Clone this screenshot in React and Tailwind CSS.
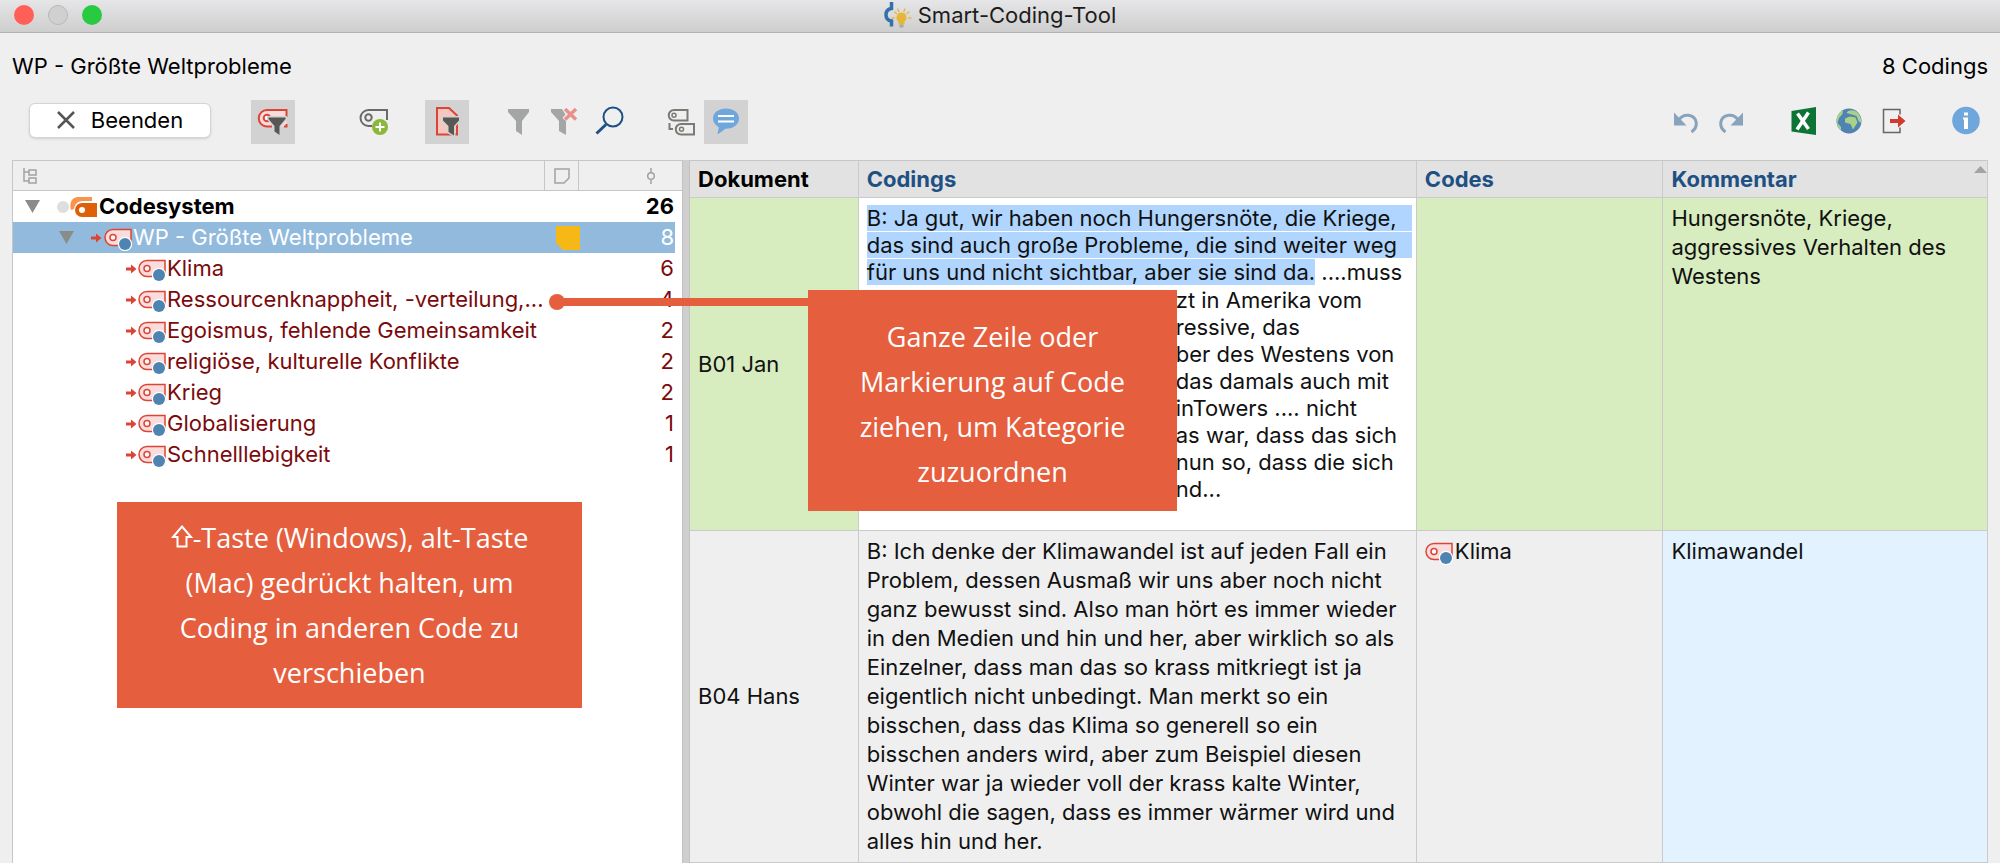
import clsx from 'clsx';

const CODES = [
  { name: 'Klima', count: 6 },
  { name: 'Ressourcenknappheit, -verteilung,...', count: 4 },
  { name: 'Egoismus, fehlende Gemeinsamkeit', count: 2 },
  { name: 'religiöse, kulturelle Konflikte', count: 2 },
  { name: 'Krieg', count: 2 },
  { name: 'Globalisierung', count: 1 },
  { name: 'Schnelllebigkeit', count: 1 },
];

const JAN_LINES = [
  'zt in Amerika vom',
  'ressive, das',
  'ber des Westens von',
  'das damals auch mit',
  'inTowers .... nicht',
  'as war, dass das sich',
  'nun so, dass die sich',
  'nd...',
];

/* ---------- icons ---------- */

function CodeIcon() {
  return (
    <svg width="28" height="26" viewBox="0 0 28 26" className="shrink-0" aria-hidden="true">
      <path d="M9 4.5H27V20.5H9A8 8 0 0 1 9 4.5Z" fill="#f9dcdb" stroke="#dc4535" strokeWidth="1.5" />
      <circle cx="9" cy="12.5" r="3" fill="#fff" stroke="#dc4535" strokeWidth="1.5" />
      <circle cx="21" cy="19" r="7.2" fill="#fff" />
      <circle cx="21" cy="19" r="6" fill="#4f84b2" />
    </svg>
  );
}

function ArrowIcon() {
  return (
    <svg width="11" height="10" viewBox="0 0 11 10" className="shrink-0" aria-hidden="true">
      <path d="M0 3.5H5V0.5L10.5 5L5 9.5V6.5H0Z" fill="#dc4535" />
    </svg>
  );
}

function CodesystemIcon() {
  return (
    <svg width="28" height="24" viewBox="0 0 28 24" className="shrink-0" aria-hidden="true">
      <path d="M1 15C-1 8 2 2 8 2H22V6H12C6 7 5 10 4 14Z" fill="#fa934e" />
      <path d="M12 8H27V22H12A7 7 0 0 1 12 8Z" fill="#dd5f07" />
      <circle cx="12" cy="15" r="3" fill="#fff" />
    </svg>
  );
}

function Triangle() {
  return (
    <svg width="15" height="13" viewBox="0 0 15 13" className="shrink-0" aria-hidden="true">
      <path d="M0 0H15L7.5 13Z" fill="#8a8c8a" />
    </svg>
  );
}

function ShiftIcon() {
  return (
    <svg width="22" height="23" viewBox="0 0 22 23" className="inline-block align-baseline" role="img" aria-label="Umschalt">
      <path d="M11 1.5L20 12H15.5V21.500H6.500V12H2Z" fill="none" stroke="#fff" strokeWidth="2" />
    </svg>
  );
}

function TitleIcon() {
  return (
    <svg width="28" height="26" viewBox="0 0 28 26" aria-hidden="true">
      <path d="M7.500 0V6.500C4 7 2 9.500 2 12.700C2 16 4 18.500 7.500 19V24.500" fill="none" stroke="#3470ab" strokeWidth="3.500" />
      <path d="M7.500 16H11M24 16H27.500M10 9.500L13 12M13.500 6.500L15 10M21 6.500L19.800 10M25.500 9.500L22.500 12" stroke="#e8b850" strokeWidth="1.500" />
      <path d="M17.500 10.500A5 5 0 0 0 14.500 19.500V22.500H20.500V19.500A5 5 0 0 0 17.500 10.500Z" fill="#e5b63a" />
      <path d="M15.500 22.500H19.500V25.500H15.500Z" fill="#a9a9a4" />
    </svg>
  );
}

function Svg({ children }) {
  return (
    <svg width="32" height="32" viewBox="0 0 32 32" fill="none" aria-hidden="true">
      {children}
    </svg>
  );
}

const CodeFilterIcon = () => (
  <Svg>
    <path d="M29.500 20V4H10A8.200 8.200 0 0 0 10 20.500H29.500Z" fill="#f9dcdb" />
    <path d="M29.500 11V4H10A8.200 8.200 0 0 0 10 20.500H15M29.500 18V20.500H27" stroke="#dc4535" strokeWidth="2" />
    <circle cx="10" cy="12" r="3.300" fill="#fff" stroke="#dc4535" strokeWidth="2" />
    <path d="M11.500 11.500H28.500V13L22.500 20V29L17.500 25.500V20L11.500 13Z" fill="#575755" stroke="#d2d2d2" strokeWidth="3" paintOrder="stroke" />
  </Svg>
);

const AddCodeIcon = () => (
  <Svg>
    <path d="M29 14V4H10.500A8 8 0 0 0 10.500 20H14" stroke="#6a6a68" strokeWidth="2" />
    <circle cx="10.500" cy="11.500" r="3.200" stroke="#6a6a68" strokeWidth="2" />
    <circle cx="22" cy="21" r="8" fill="#8bb73c" />
    <path d="M17.500 21H26.500M22 16.500V25.500" stroke="#fff" strokeWidth="2" />
  </Svg>
);

const DocFilterIcon = () => (
  <Svg>
    <path d="M6 2H18L26 9.500V28.500H6Z" fill="#f6c6c1" stroke="#dc4535" strokeWidth="2" />
    <path d="M12 11.500H28V14.500L23 20V29.500L17.500 26V20L12 14.500Z" fill="#575755" stroke="#d2d2d2" strokeWidth="3" paintOrder="stroke" />
  </Svg>
);

const FilterIcon = () => (
  <Svg>
    <path d="M5 3H26V6L19 15V29L13 25V15L5 6Z" fill="#a4a6a5" />
  </Svg>
);

const FilterClearIcon = () => (
  <Svg>
    <path d="M3 3H14L17.500 8.500L14.500 12L18 15V29L11 25V15L3 6Z" fill="#a4a6a5" />
    <path d="M17 3L28 13.500M28 3L17 13.500" stroke="#e8918b" strokeWidth="3.500" />
  </Svg>
);

const SearchIcon = () => (
  <Svg>
    <circle cx="20" cy="11" r="9.500" stroke="#1f4f86" strokeWidth="2" />
    <path d="M13 18.500L3.500 27.500" stroke="#1f4f86" strokeWidth="3" />
  </Svg>
);

const CodeLevelsIcon = () => (
  <Svg>
    <g stroke="#7b7b76" strokeWidth="2">
      <path d="M9 4H22.500V14.500H9A5.200 5.200 0 0 1 9 4Z" />
      <circle cx="9" cy="9.200" r="2" strokeWidth="1.500" />
      <path d="M16 18H29V28.500H16A5.200 5.200 0 0 1 16 18Z" />
      <circle cx="16.500" cy="23.200" r="2" strokeWidth="1.500" />
      <path d="M4.500 17V23H8" />
    </g>
  </Svg>
);

const CommentIcon = () => (
  <Svg>
    <path d="M16 2.500C8.500 2.500 3 6.800 3 12.500C3 16.200 5.300 19.300 8.800 21.200L7.500 28.500L15.500 22.800C23.500 23 29 18.500 29 12.500C29 6.800 23.500 2.500 16 2.500Z" fill="#6fa7dc" />
    <path d="M8 10H24M8 15.500H24" stroke="#fff" strokeWidth="2" />
  </Svg>
);

const UndoIcon = () => (
  <Svg>
    <path d="M4 6.500V19.500H16.500Z" fill="#88a3bc" />
    <path d="M9 14C13 7 25 7.500 26.300 17C26.500 21 24.500 24 21.500 26" stroke="#88a3bc" strokeWidth="3" />
  </Svg>
);

const RedoIcon = () => (
  <Svg>
    <path d="M28 6.500V19.500H15.500Z" fill="#88a3bc" />
    <path d="M23 14C19 7 7 7.500 5.700 17C5.500 21 7.500 24 10.500 26" stroke="#88a3bc" strokeWidth="3" />
  </Svg>
);

const ExcelIcon = () => (
  <Svg>
    <path d="M3.500 5L28 1V29L3.500 25.500Z" fill="#0c7434" />
    <path d="M9.500 7.500L20.500 23M20.500 6.500L9 23.500" stroke="#fff" strokeWidth="3.500" />
  </Svg>
);

const GlobeIcon = () => (
  <Svg>
    <circle cx="16" cy="15" r="12.500" fill="#4e83b3" />
    <path d="M4 11.500C5.500 7.500 7.500 5.500 10 4L9.500 8L6 12L4.500 17L8 21V24.500C4.500 21 3 16.500 4 11.500Z" fill="#a9d18a" />
    <path d="M13.500 7C16 3 22 4 25 7C27.500 10 28.500 13 28 17L25.500 15L23.500 10L19 8.500Z" fill="#a9d18a" />
    <path d="M12 12.500L17 10.500L22.500 11.500L24.500 16.500L20 23.500L17.500 18L12 16.500Z" fill="#a9d18a" />
  </Svg>
);

const ExportIcon = () => (
  <Svg>
    <path d="M22 8.500V3.500H5.500V26.500H22V21.500" stroke="#666" strokeWidth="1.500" />
    <path d="M12 13H20V8.500L27.500 15L20 21.500V17H12Z" fill="#d23a2d" />
  </Svg>
);

const InfoIcon = () => (
  <Svg>
    <circle cx="16" cy="14.500" r="13.800" fill="#6fa7dc" />
    <path d="M14 6.500H18V9.500H14ZM13 11.500H18V23H14V13.500H13Z" fill="#fff" />
  </Svg>
);

/* ---------- parts ---------- */

function ToolButton({ label, active, children }) {
  return (
    <button
      type="button"
      aria-label={label}
      aria-pressed={active}
      className={clsx('w-11 h-11 flex items-center justify-center', active && 'bg-[#d2d2d2]')}
    >
      {children}
    </button>
  );
}

function TitleBar() {
  return (
    <header className="h-[33px] shrink-0 px-[14px] pb-[2px] grid grid-cols-[1fr_auto_1fr] items-center bg-linear-to-b from-[#e6e6e8] to-[#cecece] border-b border-[#b2b2b2]">
      <div className="flex gap-[14px]">
        <button type="button" aria-label="Schließen" className="w-5 h-5 rounded-full bg-[#ff5f57]" />
        <button type="button" aria-label="Minimieren" className="w-5 h-5 rounded-full bg-[#d0d0d0] border border-[#b8b8b8]" />
        <button type="button" aria-label="Vergrößern" className="w-5 h-5 rounded-full bg-[#28ca41]" />
      </div>
      <h1 className="flex items-center gap-[6px] text-[22px] leading-7 text-[#1c1c1c]">
        <TitleIcon />
        Smart-Coding-Tool
      </h1>
    </header>
  );
}

function Toolbar() {
  return (
    <div className="h-11 mt-3 pl-[29px] pr-3 flex items-center">
      <button
        type="button"
        className="w-[182px] h-[35px] mb-1 flex items-center justify-center gap-4 rounded-md bg-white border border-[#d4d4d4] shadow-sm text-[22px]"
      >
        <svg width="18" height="18" viewBox="0 0 18 18" aria-hidden="true">
          <path d="M1 1L17 17M17 1L1 17" stroke="#555" strokeWidth="2.500" />
        </svg>
        Beenden
      </button>
      <div className="ml-10">
        <ToolButton label="Nach Code filtern" active><CodeFilterIcon /></ToolButton>
      </div>
      <div className="ml-[57px]">
        <ToolButton label="Neuer Code"><AddCodeIcon /></ToolButton>
      </div>
      <div className="ml-[29px]">
        <ToolButton label="Nach Dokument filtern" active><DocFilterIcon /></ToolButton>
      </div>
      <div className="ml-7 flex gap-px">
        <ToolButton label="Filter"><FilterIcon /></ToolButton>
        <ToolButton label="Filter zurücksetzen"><FilterClearIcon /></ToolButton>
        <ToolButton label="Suchen"><SearchIcon /></ToolButton>
      </div>
      <div className="ml-7 flex gap-px">
        <ToolButton label="Codeebenen"><CodeLevelsIcon /></ToolButton>
        <ToolButton label="Kommentare" active><CommentIcon /></ToolButton>
      </div>
      <div className="ml-auto flex gap-px">
        <ToolButton label="Rückgängig"><UndoIcon /></ToolButton>
        <ToolButton label="Wiederholen"><RedoIcon /></ToolButton>
      </div>
      <div className="ml-[29px] flex gap-px">
        <ToolButton label="Excel-Export"><ExcelIcon /></ToolButton>
        <ToolButton label="Web-Export"><GlobeIcon /></ToolButton>
        <ToolButton label="Exportieren"><ExportIcon /></ToolButton>
      </div>
      <div className="ml-7">
        <ToolButton label="Info"><InfoIcon /></ToolButton>
      </div>
    </div>
  );
}

function TreeHeader() {
  return (
    <div className="h-[30px] flex border-b border-[#c6c6c6] bg-[#efefef]">
      <div className="flex-1 pl-[10px] flex items-center">
        <svg width="14" height="16" viewBox="0 0 14 16" fill="none" stroke="#a2a2a2" strokeWidth="1.500" aria-hidden="true">
          <path d="M1 0V13H6M1 4H6M6 2H13V7H6ZM6 10H13V15H6Z" />
        </svg>
      </div>
      <div className="w-[35px] flex items-center justify-center border-x border-[#c6c6c6]">
        <svg width="16" height="16" viewBox="0 0 16 16" fill="none" stroke="#a2a2a2" strokeWidth="1.500" aria-hidden="true">
          <path d="M1 1H15V10L10 15H1Z" />
        </svg>
      </div>
      <div className="w-[103px] pr-[26px] flex items-center justify-end">
        <svg width="10" height="16" viewBox="0 0 10 16" fill="none" stroke="#a2a2a2" strokeWidth="1.500" aria-hidden="true">
          <path d="M5 0V4.500M5 11.500V16" />
          <circle cx="5" cy="8" r="3.300" />
        </svg>
      </div>
    </div>
  );
}

function CodeTree() {
  return (
    <section className="relative bg-white border-l border-t border-[#c6c6c6]">
      <TreeHeader />
      <ul className="pr-[7px] text-[22px] leading-[31px] text-[#7b0a0c] whitespace-nowrap">
        <li className="h-[31px] pl-3 pr-px flex items-center font-bold text-black">
          <Triangle />
          <span className="w-3 h-3 ml-[17px] mr-px rounded-full bg-[#dedede]" />
          <CodesystemIcon />
          <span className="ml-px">Codesystem</span>
          <span className="ml-auto">26</span>
        </li>
        <li className="h-[31px] pl-[46px] pr-px flex items-center bg-[#92badd] text-white">
          <Triangle />
          <span className="ml-[17px] mr-[2px]"><ArrowIcon /></span>
          <CodeIcon />
          <span className="ml-px">WP - Größte Weltprobleme</span>
          <svg width="24" height="24" viewBox="0 0 24 24" className="ml-auto" aria-hidden="true">
            <path d="M0 0H24V24H7L0 17Z" fill="#f5b816" />
          </svg>
          <span className="w-[94px] text-right">8</span>
        </li>
        {CODES.map((code) => (
          <li key={code.name} className="h-[31px] pl-[113px] pr-px flex items-center">
            <span className="mr-px"><ArrowIcon /></span>
            <CodeIcon />
            <span className="ml-px">{code.name}</span>
            <span className="ml-auto">{code.count}</span>
          </li>
        ))}
      </ul>

      <Callout className="left-[104px] top-[341px] w-[465px] h-[206px]">
        <ShiftIcon />-Taste (Windows), alt-Taste (Mac) gedrückt halten, um Coding in anderen Code zu
        verschieben
      </Callout>
    </section>
  );
}

function Callout({ className, children }) {
  return (
    <div
      className={clsx(
        'absolute px-11 flex items-center justify-center text-center bg-[#e55e3e] text-white text-[27px] leading-[45px] font-["Open_Sans",sans-serif]',
        className,
      )}
    >
      <p>{children}</p>
    </div>
  );
}

function CodingTable() {
  const cell = 'px-2 border-r border-b border-[#cacaca]';
  const head = 'h-[37px] px-2 border-r border-b border-[#cacaca] text-left font-bold';
  return (
    <section className="bg-[#efefef] border-t border-[#c6c6c6]">
      <table className="w-full table-fixed border-separate border-spacing-0 text-[22px] leading-[29px] text-[#111]">
        <thead className="bg-[#e2e2e2] text-[#1f5083]">
          <tr>
            <th className={clsx(head, 'w-[13%] text-black')}>Dokument</th>
            <th className={clsx(head, 'w-[43%]')}>Codings</th>
            <th className={clsx(head, 'w-[19%]')}>Codes</th>
            <th className={clsx(head, 'w-[25%] relative')}>
              Kommentar
              <svg width="13" height="7" viewBox="0 0 13 7" className="absolute right-0 top-[5px]" aria-hidden="true">
                <path d="M6.500 0L13 7H0Z" fill="#a3a3a3" />
              </svg>
            </th>
          </tr>
        </thead>
        <tbody>
          <tr className="h-[333px] bg-[#d7ecbf]">
            <td className={cell}>B01 Jan</td>
            <td className={clsx(cell, 'pt-[7px] pr-1 bg-white align-top leading-[27px] whitespace-nowrap')}>
              <mark className="block h-[26px] mb-px bg-[#b0d6ff] text-inherit">
                B: Ja gut, wir haben noch Hungersnöte, die Kriege,
              </mark>
              <mark className="block h-[26px] mb-px bg-[#b0d6ff] text-inherit">
                das sind auch große Probleme, die sind weiter weg
              </mark>
              <mark className="bg-[#b0d6ff] text-inherit">für uns und nicht sichtbar, aber sie sind da.</mark> ....muss
              <div className="mt-px pl-[309px]">
                {JAN_LINES.map((line) => (
                  <div key={line}>{line}</div>
                ))}
              </div>
            </td>
            <td className={cell} />
            <td className={clsx(cell, 'py-[6px] align-top')}>
              Hungersnöte, Kriege, aggressives Verhalten des Westens
            </td>
          </tr>
          <tr>
            <td className={cell}>B04 Hans</td>
            <td className={clsx(cell, 'py-[6px] align-top')}>
              B: Ich denke der Klimawandel ist auf jeden Fall ein Problem, dessen Ausmaß wir uns aber
              noch nicht ganz bewusst sind. Also man hört es immer wieder in den Medien und hin und
              her, aber wirklich so als Einzelner, dass man das so krass mitkriegt ist ja eigentlich
              nicht unbedingt. Man merkt so ein bisschen, dass das Klima so generell so ein bisschen
              anders wird, aber zum Beispiel diesen Winter war ja wieder voll der krass kalte Winter,
              obwohl die sagen, dass es immer wärmer wird und alles hin und her.
            </td>
            <td className={clsx(cell, 'py-[6px] align-top')}>
              <span className="flex items-center gap-[2px]">
                <CodeIcon />
                Klima
              </span>
            </td>
            <td className={clsx(cell, 'py-[6px] align-top bg-[#e2f2fe]')}>Klimawandel</td>
          </tr>
        </tbody>
      </table>
    </section>
  );
}

export default function App() {
  return (
    <div className="h-screen flex flex-col overflow-hidden bg-[#efefef] text-black font-[Inter,sans-serif]">
      <TitleBar />
      <div className="h-[55px] px-3 pt-[18px] flex justify-between text-[22px] leading-[30px]">
        <h2>WP - Größte Weltprobleme</h2>
        <span>8 Codings</span>
      </div>
      <Toolbar />
      <main className="relative flex-1 mt-4 mx-3 grid grid-cols-[670px_8px_1fr]">
        <CodeTree />
        <div className="bg-[#cfcfcf] border-x border-[#c2c2c2]" />
        <CodingTable />

        {/* Callout with pointer to the tree row */}
        <div className="absolute left-[545px] top-[138px] w-[251px] h-2 bg-[#e55e3e]">
          <span className="absolute -left-2 -top-1 w-4 h-4 rounded-full bg-[#e55e3e]" />
        </div>
        <Callout className="left-[796px] top-[130px] w-[369px] h-[221px] pt-[6px]">
          Ganze Zeile oder Markierung auf Code ziehen, um Kategorie zuzuordnen
        </Callout>
      </main>
    </div>
  );
}
